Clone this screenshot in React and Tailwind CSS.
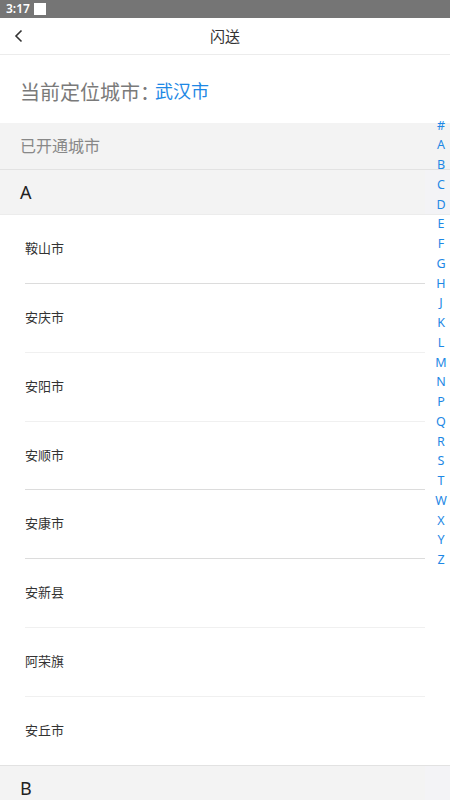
// City picker page: current location, opened cities grouped by letter,
// and an alphabet index on the right edge.

const LETTERS = ["#", "A", "B", "C", "D", "E", "F", "G", "H", "J", "K", "L", "M", "N", "P", "Q", "R", "S", "T", "W", "X", "Y", "Z"];

// row height and separator tone per city (measured from the design)
const CITIES_A = [
  { name: "鞍山市", cls: "h-[69px] border-b border-[#dcdcdc]" },
  { name: "安庆市", cls: "h-[69px] border-b border-[#f0f0f0]" },
  { name: "安阳市", cls: "h-[69px] border-b border-[#f0f0f0]" },
  { name: "安顺市", cls: "h-[68px] border-b border-[#dcdcdc]" },
  { name: "安康市", cls: "h-[69px] border-b border-[#dcdcdc]" },
  { name: "安新县", cls: "h-[69px] border-b border-[#f0f0f0]" },
  { name: "阿荣旗", cls: "h-[69px] border-b border-[#f0f0f0]" },
  { name: "安丘市", cls: "h-[68px]" },
];

const font = { fontFamily: '"Noto Sans", "Noto Sans CJK SC", sans-serif' };

const GroupHeader = ({ letter }) => (
  <div className="flex h-[45px] border-t border-[#e2e2e2] bg-[#f3f3f3]">
    <div className="flex flex-1 items-center pl-5 text-[18px] text-[#222]">{letter}</div>
    <div className="w-[25px] bg-[#f3f3f6]" />
  </div>
);

const App = () => {
  return (
    <div className="relative h-[800px] w-[450px] overflow-hidden bg-white" style={font}>
      {/* Status bar */}
      <div className="flex h-[18px] items-center gap-1 bg-[#757575] px-[6px]">
        <span className="text-[12px] font-semibold leading-none text-white">3:17</span>
        <span className="h-[12px] w-[12px] bg-white" />
      </div>

      {/* Nav bar */}
      <nav className="relative flex h-[37px] items-center justify-center border-b border-[#ececec]">
        <svg className="absolute left-[13px] top-[11px]" width="12" height="14" viewBox="0 0 12 14" fill="none">
          <path d="M8.5 1.5L3 7l5.5 5.5" stroke="#333" strokeWidth="1.6" />
        </svg>
        <h1 className="text-[15px] text-[#333]">闪送</h1>
      </nav>

      {/* Current location */}
      <div className="flex h-[68px] items-center pl-5 pt-[5px]">
        <span className="text-[20px] text-[#7a7a7a]" style={{ fontFamily: '"Noto Sans CJK SC", sans-serif' }}>
          当前定位城市<span className="tracking-[-5px]">：</span>
        </span>
        <span className="text-[18px] text-[#1e88e5]">武汉市</span>
      </div>

      {/* Opened cities label */}
      <div className="flex h-[46px] items-center bg-[#f3f3f3] pl-5 text-[16px] text-[#888]">已开通城市</div>

      <GroupHeader letter="A" />

      <div className="border-t border-[#ececec]">
        {CITIES_A.map((city) => (
          <div key={city.name} className="pl-[25px] pr-[25px]">
            <div className={`flex items-center text-[13px] text-[#333] ${city.cls}`}>{city.name}</div>
          </div>
        ))}
      </div>

      <GroupHeader letter="B" />

      {/* Alphabet index */}
      <div className="absolute right-0 top-[116px] flex w-[18px] flex-col items-center">
        {LETTERS.map((l) => (
          <span key={l} className="flex h-[19.75px] items-center text-[12.5px] leading-none text-[#1e88e5]">
            {l}
          </span>
        ))}
      </div>
    </div>
  );
};

export default App;
